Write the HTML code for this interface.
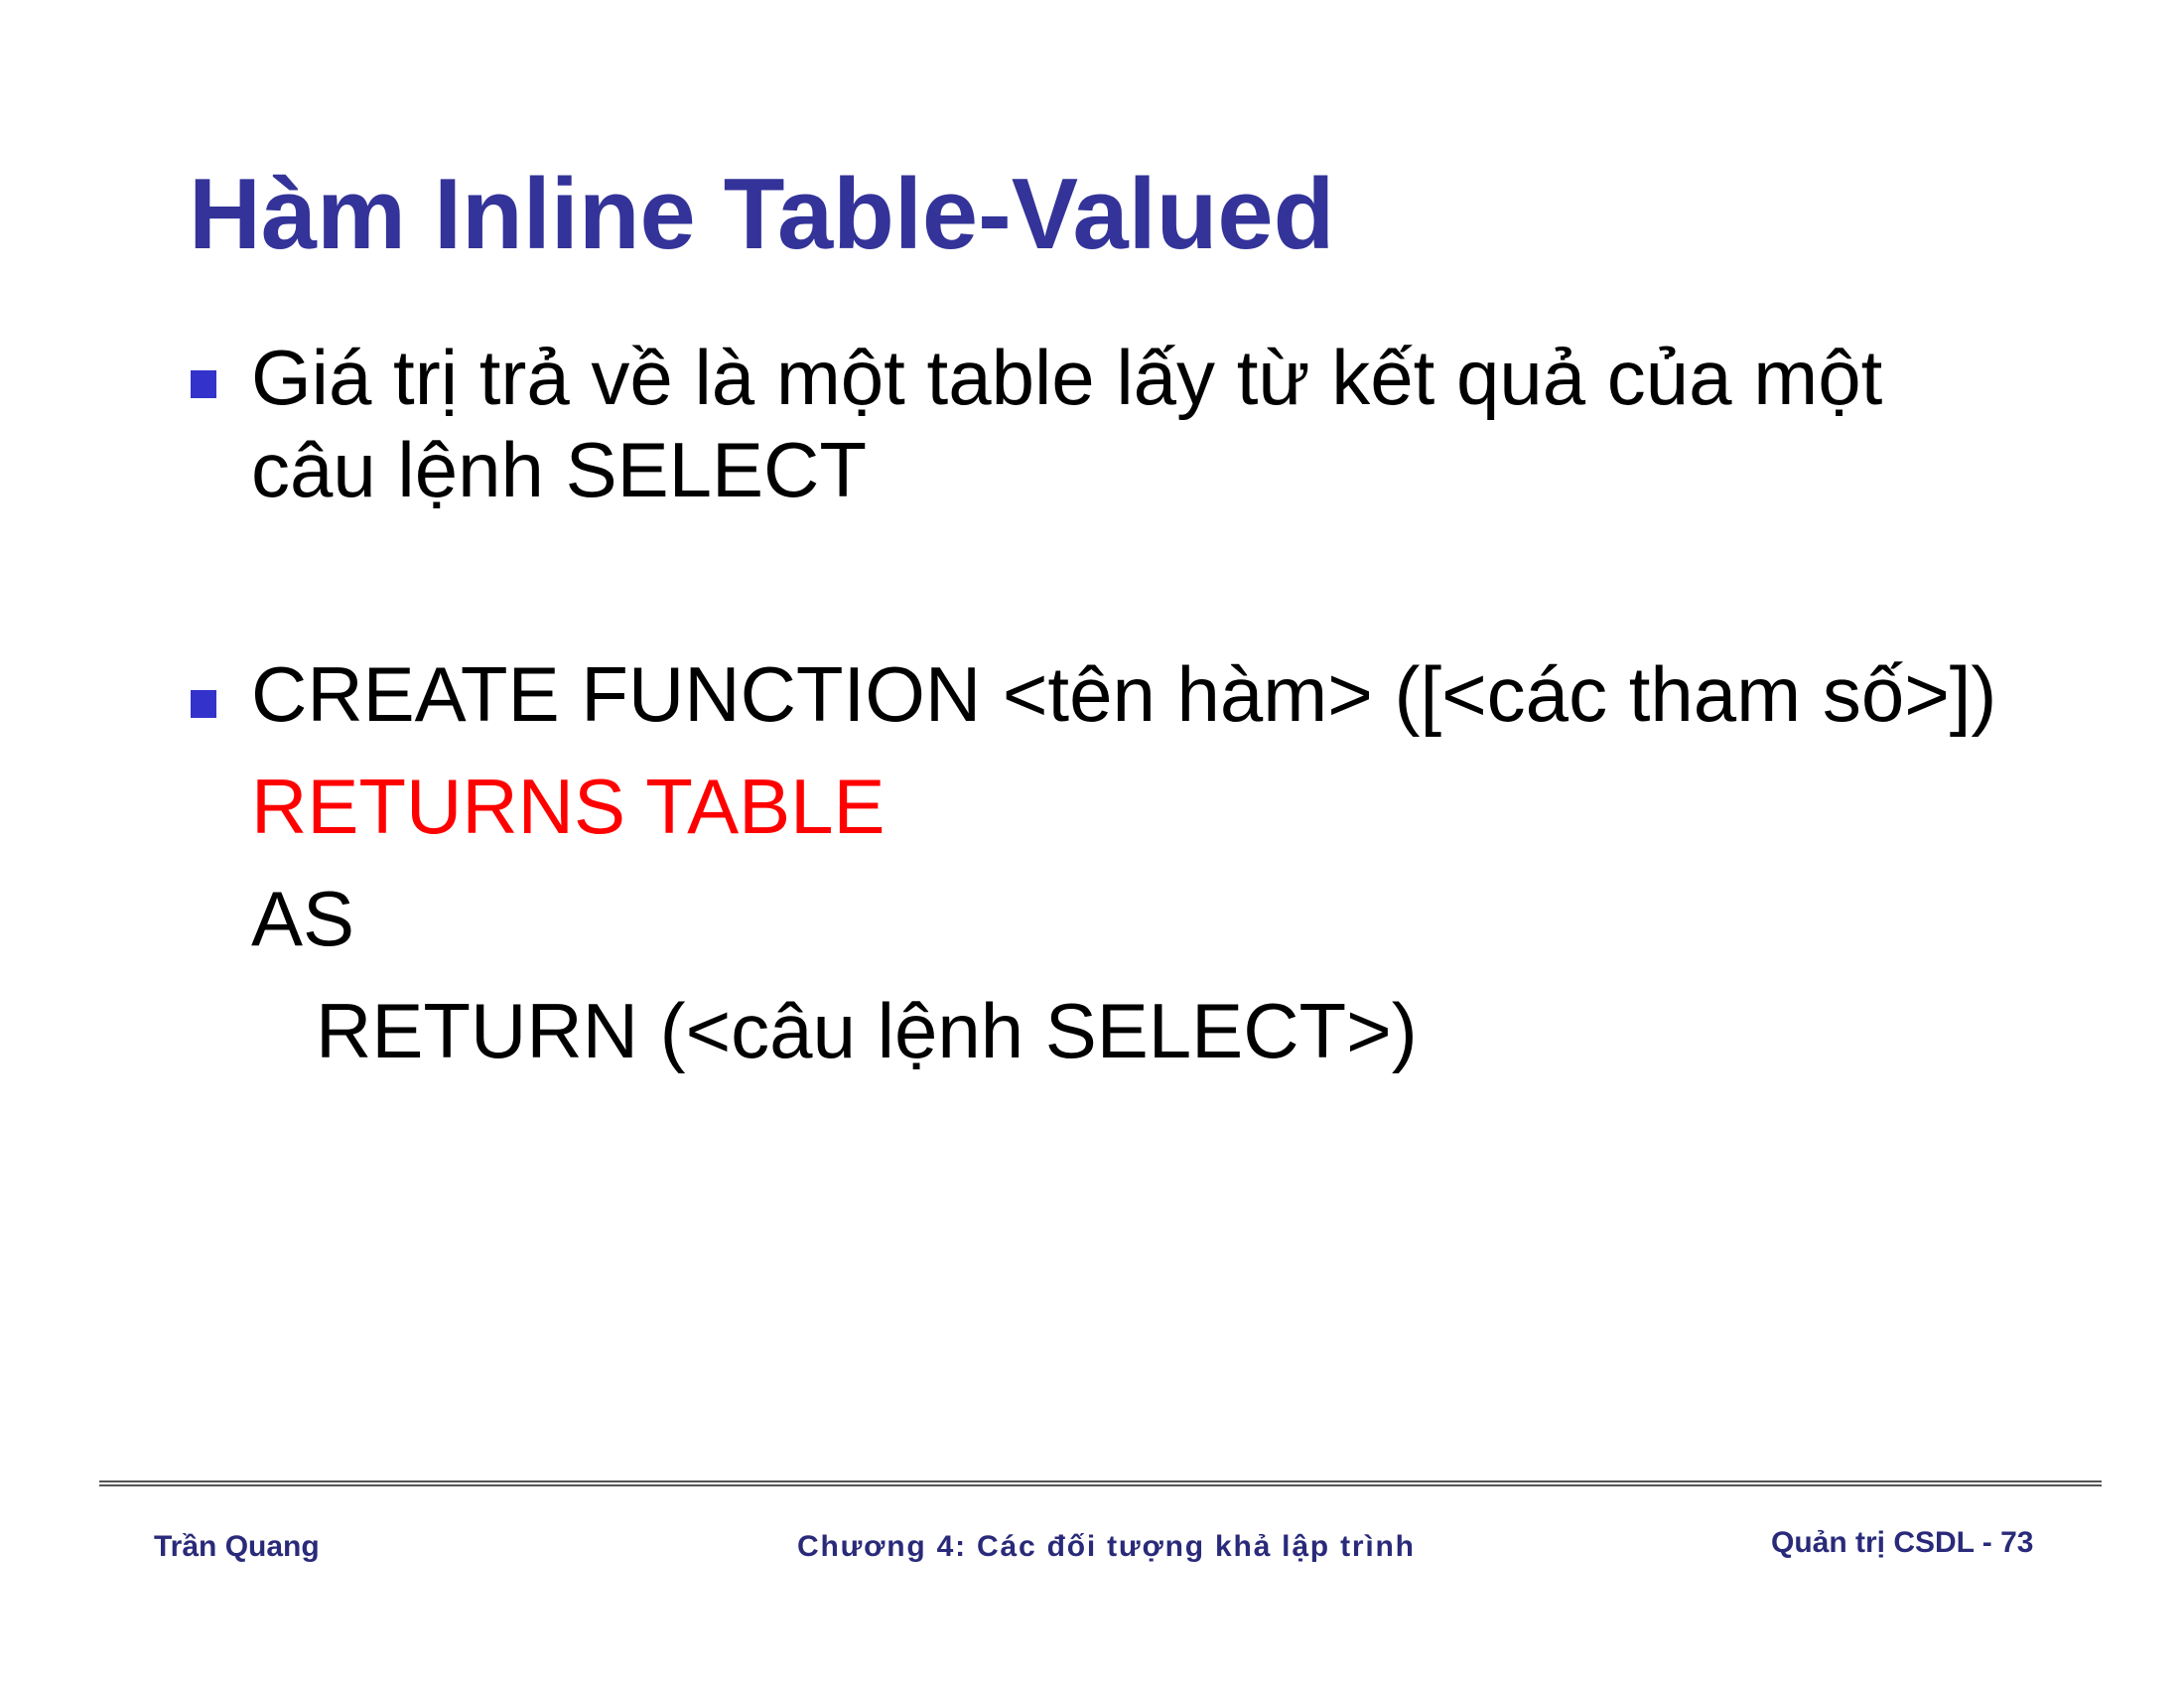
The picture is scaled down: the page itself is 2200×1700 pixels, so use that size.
<!DOCTYPE html>
<html><head><meta charset="utf-8"><style>
body{margin:0;width:2200px;height:1700px;background:#fff;position:relative;overflow:hidden;font-family:"Liberation Sans",Arial,sans-serif}
.a{position:absolute;white-space:nowrap;line-height:1}
.t{left:190px;top:166px;font-size:101px;font-weight:bold;color:#333399}
.b{font-size:78px;color:#000}
.sq{position:absolute;width:26px;height:28px;background:#3333cc}
.f{font-size:30px;font-weight:bold;color:#2a2a7a}
</style></head><body>
<div class="a t">Hàm Inline Table-Valued</div>
<div class="sq" style="left:192px;top:373px"></div>
<div class="a b" style="left:253px;top:341px">Giá trị trả về là một table lấy từ kết quả của một</div>
<div class="a b" style="left:253px;top:434px">câu lệnh SELECT</div>
<div class="sq" style="left:192px;top:695px"></div>
<div class="a b" style="left:253px;top:660px">CREATE FUNCTION &lt;tên hàm&gt; ([&lt;các tham số&gt;])</div>
<div class="a b" style="left:253px;top:773px;color:#ff0000">RETURNS TABLE</div>
<div class="a b" style="left:253px;top:886px">AS</div>
<div class="a b" style="left:318px;top:999px">RETURN (&lt;câu lệnh SELECT&gt;)</div>
<div style="position:absolute;left:100px;top:1491px;width:2017px;height:2px;background:#555"></div>
<div style="position:absolute;left:100px;top:1495px;width:2017px;height:2px;background:#555"></div>
<div class="a f" style="left:155px;top:1543px">Trần Quang</div>
<div class="a f" style="left:803px;top:1543px;letter-spacing:1.8px">Chương 4: Các đối tượng khả lập trình</div>
<div class="a f" style="left:1784px;top:1539px">Quản trị CSDL - 73</div>
</body></html>
